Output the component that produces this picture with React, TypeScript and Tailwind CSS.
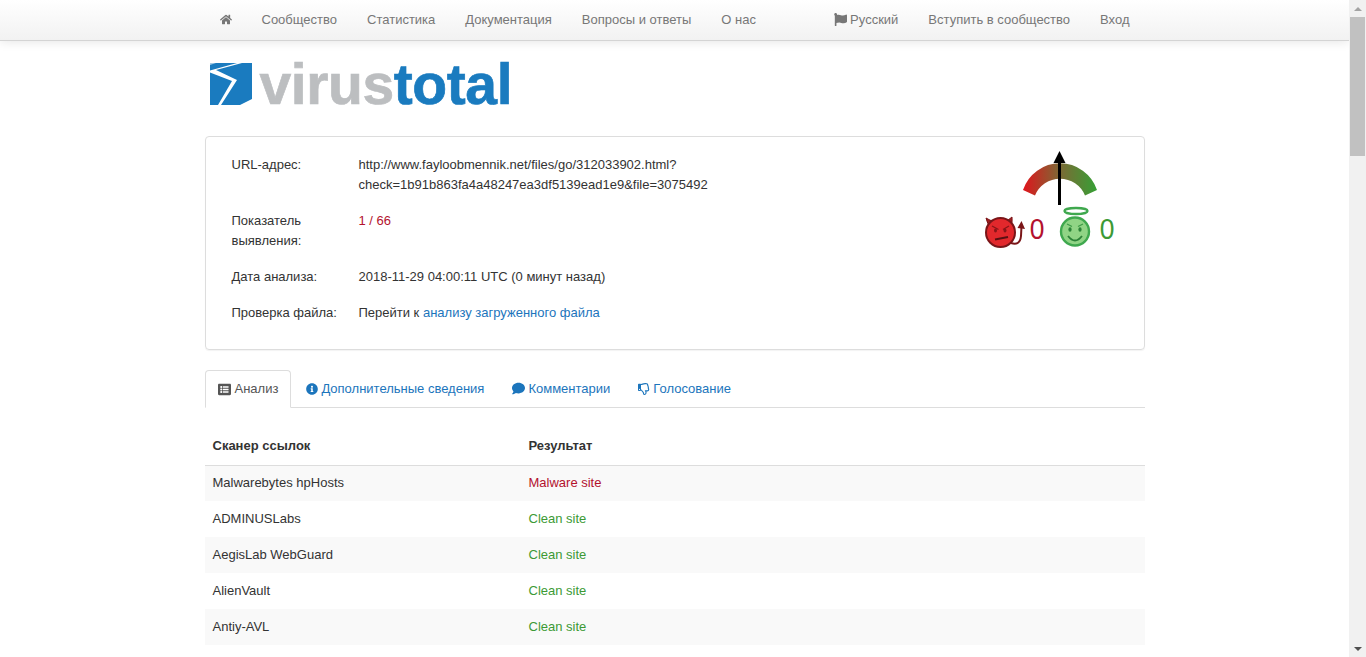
import { FaComment, FaFlag, FaHome, FaInfoCircle, FaListAlt, FaRegThumbsDown } from 'react-icons/fa';

const rows = [
  { name: 'Malwarebytes hpHosts', result: 'Malware site', bad: true },
  { name: 'ADMINUSLabs', result: 'Clean site', bad: false },
  { name: 'AegisLab WebGuard', result: 'Clean site', bad: false },
  { name: 'AlienVault', result: 'Clean site', bad: false },
  { name: 'Antiy-AVL', result: 'Clean site', bad: false },
];

const Emblem = () => (
  <svg width="42" height="42" viewBox="0 0 42 42" className="shrink-0">
    <rect width="42" height="42" fill="#1a7bbf" />
    <path d="M27 0 L0 7.5 L0 9.5 L22 18 L8 42 L11 42 L27 17 L6 7 L32 0 Z" fill="#fff" />
    <path d="M42 36 L30 42 L42 42 Z" fill="#fff" />
    <path d="M0 0 H6 L0 2 Z" fill="#fff" opacity="0.6" />
  </svg>
);

const Gauge = () => (
  <svg width="150" height="110" viewBox="0 0 150 110" className="shrink-0">
    <defs>
      <linearGradient id="arc" x1="0" x2="1" y1="0" y2="0">
        <stop offset="0" stopColor="#e0141c" />
        <stop offset="0.5" stopColor="#7c6a35" />
        <stop offset="1" stopColor="#36a035" />
      </linearGradient>
    </defs>
    {/* gauge arc + needle */}
    <path d="M43 45 A39 39 0 0 1 117 45 L105 50.5 A27 27 0 0 0 55 50.5 Z" fill="url(#arc)" />
    <path d="M79.5 60 V16" stroke="#000" strokeWidth="3" />
    <path d="M79.5 6 L85.5 18 H73.5 Z" fill="#000" />

    {/* devil */}
    <path d="M6 73 Q7 79 11 82 L15 76 Q10 76 6 73 Z" fill="#a01c20" stroke="#7a1518" />
    <path d="M32 72 Q33 78 30 82 L25 76 Q29 75 32 72 Z" fill="#a01c20" stroke="#7a1518" />
    <path d="M31 98 Q40 101 41 91 L41.5 81" fill="none" stroke="#7a1518" strokeWidth="2" />
    <path d="M37.5 83 L41.5 76 L45 84 Z" fill="#7a1518" />
    <circle cx="20.5" cy="87.5" r="14.5" fill="#e2282c" stroke="#7a1518" strokeWidth="2" />
    <path d="M12 81 L18.5 84.5 M29 81 L23 84.5" stroke="#8a1518" strokeWidth="1.4" />
    <ellipse cx="15.5" cy="85.5" rx="1.5" ry="2" fill="#8a1518" />
    <ellipse cx="25" cy="85.5" rx="1.5" ry="2" fill="#8a1518" />
    <path d="M15 94.5 L28 92" stroke="#5a1012" strokeWidth="1.8" />
    <text transform="translate(57 94) scale(0.88 1)" textAnchor="middle" fontFamily="'Liberation Sans', sans-serif" fontSize="30" fill="#b3122e">0</text>

    {/* angel */}
    <ellipse cx="96" cy="66" rx="11.5" ry="3" fill="none" stroke="#3fa84e" strokeWidth="2.4" />
    <circle cx="95" cy="86.5" r="14" fill="#90d485" stroke="#3fa84e" strokeWidth="2.4" />
    <path d="M87 79 L92 81.5 M103 79 L98 81.5" stroke="#3c9a45" strokeWidth="1.2" />
    <ellipse cx="90" cy="84.5" rx="1.6" ry="2.2" fill="#2c8238" />
    <ellipse cx="100" cy="84.5" rx="1.6" ry="2.2" fill="#2c8238" />
    <path d="M88 91 Q95 100 102 91" fill="none" stroke="#2c8238" strokeWidth="1.8" />
    <text transform="translate(127 94) scale(0.88 1)" textAnchor="middle" fontFamily="'Liberation Sans', sans-serif" fontSize="30" fill="#3c9a35">0</text>
  </svg>
);

const App = () => {
  return (
    <div className="flex h-[657px] overflow-hidden bg-white font-['Liberation_Sans',Arial,sans-serif] text-[13px] leading-5 text-[#333]">
      <div className="flex min-w-0 flex-1 flex-col">
        <header className="h-[41px] shrink-0 border-b border-[#d4d4d4] bg-gradient-to-b from-white to-[#f2f2f2] shadow-[0_1px_10px_rgba(0,0,0,0.1)]">
          <nav className="mx-auto flex h-[39px] w-[940px] items-center justify-between text-[#777]">
            <div className="flex items-center">
              <a className="px-[15px] text-[#777]">
                <FaHome className="w-3 text-[13px]" />
              </a>
              <a className="px-[15px]">Сообщество</a>
              <a className="px-[15px]">Статистика</a>
              <a className="px-[15px]">Документация</a>
              <a className="px-[15px]">Вопросы и ответы</a>
              <a className="px-[15px]">О нас</a>
            </div>
            <div className="flex items-center">
              <a className="flex items-center gap-[3px] px-[15px]">
                <FaFlag className="text-[13px]" /> Русский
              </a>
              <a className="px-[15px]">Вступить в сообщество</a>
              <a className="px-[15px]">Вход</a>
            </div>
          </nav>
        </header>

        <main className="mx-auto w-[940px]">
          <div className="flex h-[95px] items-start gap-2 pl-[5px] pt-[22px]">
            <Emblem />
            <span className="-mt-[12px] text-[57px] leading-[66px] font-bold tracking-[-0.4px] text-[#bcbec0] [-webkit-text-stroke:0.7px_#bcbec0]">
              virus<span className="text-[#1a7bbf] [-webkit-text-stroke:0.7px_#1a7bbf]">total</span>
            </span>
          </div>

          <section className="flex h-[214px] justify-between rounded border border-[#ddd] pt-[18px] pr-[14px] pl-[26px] shadow-[0_1px_1px_rgba(0,0,0,0.05)]">
            <div className="flex flex-col gap-4">
              <div className="flex">
                <div className="w-[127px]">URL-адрес:</div>
                <div>
                  http://www.fayloobmennik.net/files/go/312033902.html?
                  <br />
                  check=1b91b863fa4a48247ea3df5139ead1e9&amp;file=3075492
                </div>
              </div>
              <div className="flex">
                <div className="w-[127px]">
                  Показатель
                  <br />
                  выявления:
                </div>
                <div className="text-[#b3122e]">1 / 66</div>
              </div>
              <div className="flex">
                <div className="w-[127px]">Дата анализа:</div>
                <div>2018-11-29 04:00:11 UTC (0 минут назад)</div>
              </div>
              <div className="flex">
                <div className="w-[127px]">Проверка файла:</div>
                <div>
                  Перейти к <a className="text-[#1c75bc]">анализу загруженного файла</a>
                </div>
              </div>
            </div>
            <div className="-mt-[10px]">
              <Gauge />
            </div>
          </section>

          <ul className="mt-5 flex h-[38px] border-b border-[#ddd] text-[#1c75bc]">
            <li className="flex h-[38px] items-center gap-1 rounded-t border border-[#ddd] border-b-white bg-white px-3 text-[#555]">
              <FaListAlt className="text-[13px]" /> Анализ
            </li>
            <li className="flex items-center gap-[3px] px-[15px]">
              <FaInfoCircle className="text-xs" /> Дополнительные сведения
            </li>
            <li className="flex items-center gap-[3px] px-[13px]">
              <FaComment className="text-[13px]" /> Комментарии
            </li>
            <li className="flex items-center gap-[3px] px-[15px]">
              <FaRegThumbsDown className="text-xs" /> Голосование
            </li>
          </ul>

          <table className="mt-5 w-full border-collapse">
            <thead>
              <tr className="h-[37px] border-b border-[#ddd] text-left font-bold">
                <th className="w-[316px] px-2">Сканер ссылок</th>
                <th className="px-2">Результат</th>
              </tr>
            </thead>
            <tbody>
              {rows.map((row, i) => (
                <tr key={row.name} className={i % 2 === 0 ? 'h-9 bg-[#f9f9f9]' : 'h-9'}>
                  <td className="px-2">{row.name}</td>
                  <td className={row.bad ? 'px-2 text-[#b3122e]' : 'px-2 text-[#3c9a35]'}>{row.result}</td>
                </tr>
              ))}
            </tbody>
          </table>
        </main>
      </div>

      <div className="flex w-[17px] shrink-0 flex-col items-center bg-[#f1f1f1]">
        <div className="flex h-[17px] w-full items-center justify-center">
          <div className="h-0 w-0 border-x-4 border-b-4 border-x-transparent border-b-[#a3a3a3]" />
        </div>
        <div className="h-[139px] w-[15px] bg-[#c1c1c1]" />
        <div className="flex-1" />
        <div className="flex h-[17px] w-full items-center justify-center">
          <div className="h-0 w-0 border-x-4 border-t-4 border-x-transparent border-t-[#505050]" />
        </div>
      </div>
    </div>
  );
};

export default App;
